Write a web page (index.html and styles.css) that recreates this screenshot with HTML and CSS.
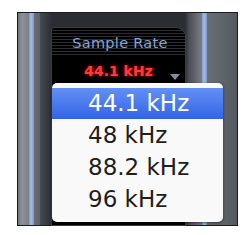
FILE: index.html
```html
<!doctype html>
<html lang="en">
<head>
    <meta charset="UTF-8">
    <title>Sample Rate</title>
    <link rel="stylesheet" href="styles.css">
</head>
<body>
    <div class="frame">
        <div class="panel">
            <div class="lines">
                <div class="label">Sample Rate</div>
            </div>
            <div class="value">
                44.1 kHz
                <div class="arrow"></div>
            </div>
        </div>
        <ul class="menu">
            <li class="selected">44.1 kHz</li>
            <li>48 kHz</li>
            <li>88.2 kHz</li>
            <li>96 kHz</li>
        </ul>
    </div>
</body>
</html>
```

FILE: styles.css
```css
* {
    margin: 0;
    padding: 0;
    box-sizing: border-box;
}
body {
    background: #fff;
    width: 246px;
    height: 235px;
    overflow: hidden;
    font-family: 'DejaVu Sans', sans-serif;
}
.frame {
    position: relative;
    margin: 12px 0 0 17px;
    width: 221px;
    height: 214px;
    border: 1px solid #1c1c1e;
    padding: 15px 0 0 34px;
    background: linear-gradient(to right,
        #6f737a 0, #8d9198 4px, #7c8087 11px,
        #7f98c6 11px, #a6bde6 13px, #7f98c6 16px,
        #6a6e75 16px, #5d6168 22px,
        #464a51 22px, #34383e 30px, #2a2d32 34px,
        #2a2d32 167px, #4a4e55 171px, #6c7077 180px, #7a7e85 184px,
        #7f98c6 184px, #a6bde6 186px, #7f98c6 189px,
        #6a6e75 189px, #5f636a 205px, #54585f 219px);
}
.panel {
    width: 133px;
    height: 100%;
    background: #000;
    border-radius: 3px 9px 0 0;
    box-shadow: 0 0 0 1px #3a3d42;
}
.lines {
    height: 28px;
    padding-top: 7px;
    border-radius: 3px 9px 0 0;
    background: repeating-linear-gradient(to bottom, #000 0, #000 2px, #2b2d30 2px, #2b2d30 3px);
}
.label {
    font-size: 14.5px;
    line-height: 16px;
    letter-spacing: 0.3px;
    text-align: center;
    color: #87a5d6;
    padding-left: 3px;
}
.value {
    position: relative;
    margin-top: 7px;
    font-size: 14px;
    line-height: 16px;
    font-weight: bold;
    text-align: center;
    color: #ff3a3a;
    text-shadow: 0 0 2px #c00000, 0 0 4px #900000;
}
.arrow {
    position: absolute;
    left: 118px;
    top: 11px;
    width: 0;
    height: 0;
    border-left: 5px solid transparent;
    border-right: 5px solid transparent;
    border-top: 6px solid #7d909e;
}
.menu {
    position: absolute;
    left: 34px;
    top: 70px;
    width: 171px;
    height: 139px;
    list-style: none;
    background: #f9f9f9;
    border-radius: 5px;
    padding-top: 5px;
    box-shadow: 0 1px 3px rgba(0, 0, 0, 0.5);
}
.menu li {
    height: 32px;
    line-height: 32px;
    padding-left: 36px;
    font-size: 23px;
    color: #1e1e1e;
}
.menu li.selected {
    height: 31px;
    line-height: 31px;
    color: #fff;
    background: linear-gradient(to bottom, #6290f4, #3464e6);
}
```
